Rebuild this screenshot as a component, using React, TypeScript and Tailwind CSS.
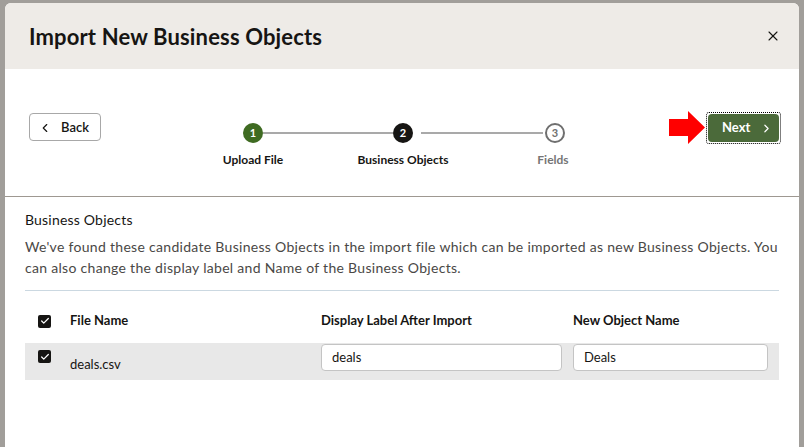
import { ChevronLeft, ChevronRight, X, Check } from 'lucide-react';

const font = { fontFamily: 'Lato, "Noto Sans", sans-serif' };

function CheckBox() {
  return (
    <span className="flex h-[13px] w-[13px] items-center justify-center rounded-[2px] bg-[#161513]">
      <Check size={10} strokeWidth={3} className="text-white" />
    </span>
  );
}

function RedArrow() {
  return (
    <svg width="36" height="33" viewBox="0 0 36 33">
      <polygon points="0,8 19,8 19,0 36,16.5 19,33 19,25 0,25" fill="#ff0000" />
    </svg>
  );
}

export default function App() {
  return (
    <div className="h-[447px] w-[804px] overflow-hidden bg-[#a19e9a] pl-[5px] pt-[3px]" style={font}>
      <div className="h-[460px] w-[794px] overflow-hidden rounded-t-[6px] bg-white">
        {/* header */}
        <div className="flex h-[66px] items-center justify-between bg-[#eeebe7] pl-6 pr-[18px]">
          <h1 className="text-[22px] font-bold tracking-[0.15px] text-[#161513]">Import New Business Objects</h1>
          <X size={16} strokeWidth={1.6} className="text-[#161513]" />
        </div>

        {/* train / actions */}
        <div className="flex h-[128px] items-start border-b border-[#9e9891]">
          <button className="ml-6 mt-[44px] flex h-[28px] w-[72px] items-center gap-[9px] rounded-[4px] border border-[#a8a8a8] pl-[8px] pt-px text-[13px] font-semibold text-[#161513]">
            <ChevronLeft size={14} strokeWidth={2} />
            Back
          </button>

          <div className="ml-[77px] mt-[54px] w-[450px]">
            <div className="flex items-center pl-[65px]">
              <span className="flex h-5 w-5 items-center justify-center rounded-full bg-[#3f6b22] text-[11px] font-bold text-white">1</span>
              <span className="h-[2px] w-[130px] bg-[#a9a9a9]" />
              <span className="flex h-5 w-5 items-center justify-center rounded-full bg-[#161513] text-[11px] font-bold text-white">2</span>
              <span className="ml-2 h-[2px] w-[122px] bg-[#a9a9a9]" />
              <span className="ml-[2px] flex h-5 w-5 items-center justify-center rounded-full border-2 border-[#6f6f6f] text-[11px] font-bold text-[#6f6f6f]">3</span>
            </div>
            <div className="mt-[9px] flex text-[12px] font-bold leading-4">
              <span className="w-[150px] text-center text-[#161513]">Upload File</span>
              <span className="w-[150px] text-center text-[#161513]">Business Objects</span>
              <span className="w-[150px] text-center text-[#757575]">Fields</span>
            </div>
          </div>

          <div className="ml-[41px] mt-[42px] flex items-center gap-[3px]">
            <RedArrow />
            <div className="outline-1 outline-dotted outline-offset-[1px] outline-black rounded-[1px]">
              <button className="flex h-[28px] w-[71px] items-center gap-[10px] rounded-[4px] bg-[#4b6a3a] pl-[14px] pt-px text-[13px] font-bold text-white">
                Next
                <ChevronRight size={13} strokeWidth={2.2} />
              </button>
            </div>
          </div>
        </div>

        {/* content */}
        <div className="px-5 pt-[13px]">
          <h2 className="text-[14px] leading-5 tracking-[0.2px] text-[#161513]">Business Objects</h2>
          <p className="mt-[6px] text-[14px] leading-[21px] tracking-[0.3px] text-[#4a4846]">
            We've found these candidate Business Objects in the import file which can be imported as new Business Objects. You can also change the display label and Name of the Business Objects.
          </p>
          <div className="mt-3 h-px bg-[#cbd8e1]" />

          <div className="mt-5 flex h-5 items-center text-[13px] font-bold text-[#161513]">
            <span className="ml-[13px]"><CheckBox /></span>
            <span className="ml-[19px] w-[251px]">File Name</span>
            <span className="w-[252px]">Display Label After Import</span>
            <span>New Object Name</span>
          </div>

          <div className="mt-3 flex h-[37px] items-start bg-[#e8e8e8]">
            <span className="ml-[13px] mt-[7px]"><CheckBox /></span>
            <span className="ml-[19px] mt-[13px] w-[251px] text-[13px] leading-4 text-[#161513]">deals.csv</span>
            <div className="mt-px flex h-[27px] w-[241px] items-center rounded-[4px] border border-[#c4c4c4] bg-white pl-[10px] text-[13px] text-[#161513]">deals</div>
            <div className="ml-[11px] mt-px flex h-[27px] w-[195px] items-center rounded-[4px] border border-[#c4c4c4] bg-white pl-[10px] text-[13px] text-[#161513]">Deals</div>
          </div>
        </div>
      </div>
    </div>
  );
}
